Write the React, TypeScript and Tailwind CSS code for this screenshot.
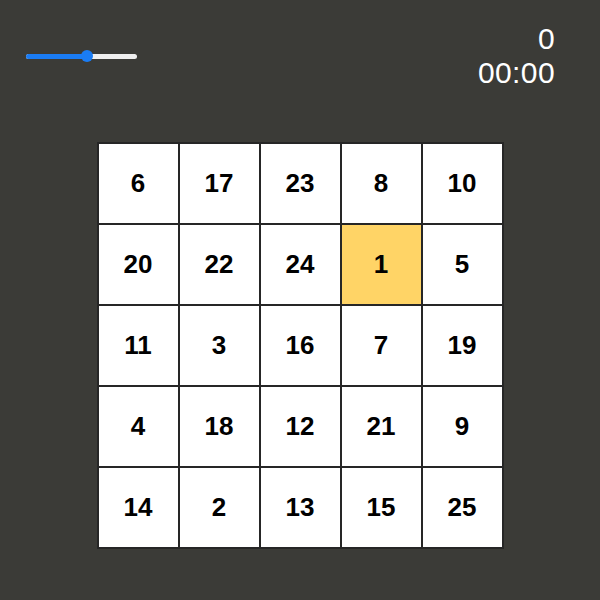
const board = [
  [6, 17, 23, 8, 10],
  [20, 22, 24, 1, 5],
  [11, 3, 16, 7, 19],
  [4, 18, 12, 21, 9],
  [14, 2, 13, 15, 25],
];

function Slider({ value }: { value: number }) {
  return (
    <div className="relative w-[111px] h-[10px] flex items-center">
      <div className="w-full h-[5px] rounded-full bg-[#efefef] overflow-hidden">
        <div className="h-full bg-[#1a7cf4]" style={{ width: `${value}%` }} />
      </div>
      <div
        className="absolute top-0 w-[12px] h-[12px] -mt-[1px] -ml-[6px] rounded-full bg-[#1a7cf4]"
        style={{ left: `${value}%` }}
      />
    </div>
  );
}

export default function App() {
  return (
    <div className="w-[600px] h-[600px] bg-[#3b3b37] flex flex-col font-['Liberation_Sans',Arial,sans-serif]">
      {/* Top bar */}
      <div className="flex justify-between items-start pl-[26px] pr-[45px] pt-[22px]">
        <div className="pt-[29px]">
          <Slider value={55} />
        </div>
        <div className="flex flex-col items-end text-white text-[30px] leading-[34px] tracking-[0.4px]">
          <span>0</span>
          <span>00:00</span>
        </div>
      </div>

      {/* Board */}
      <div className="flex justify-center pt-[52px]">
        <div className="grid grid-cols-5 gap-[2px] p-[2px] bg-[#262626]">
          {board.flat().map((n) => (
            <div
              key={n}
              className={
                n === 1
                  ? "w-[79px] h-[79px] flex items-center justify-center bg-[#ffd466] text-black text-[26px] font-bold"
                  : "w-[79px] h-[79px] flex items-center justify-center bg-white text-black text-[26px] font-bold"
              }
            >
              {n}
            </div>
          ))}
        </div>
      </div>
    </div>
  );
}
